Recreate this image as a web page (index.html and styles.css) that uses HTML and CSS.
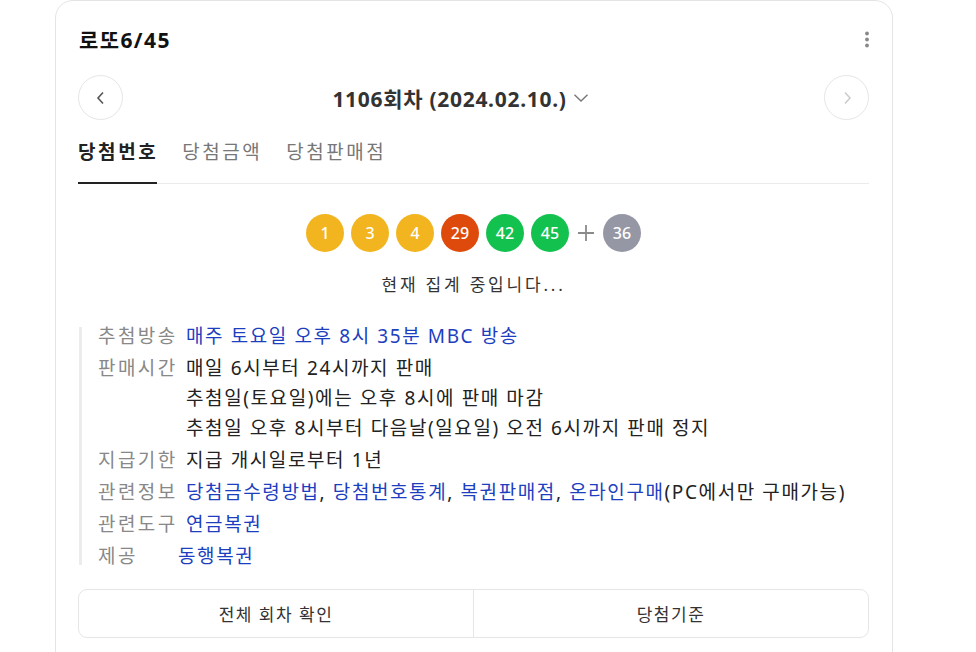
FILE: index.html
```html
<!DOCTYPE html>
<html lang="ko">
<head>
    <meta charset="UTF-8">
    <title>로또6/45 당첨번호</title>
    <link rel="stylesheet" href="styles.css">
</head>
<body>
<div class="page">
    <div class="card">
        <div class="card-head">
            <h2 class="title">로또6/45</h2>
            <button class="more" aria-label="더보기">
                <svg width="6" height="18" viewBox="0 0 6 18"><circle cx="3" cy="2.5" r="1.9"/><circle cx="3" cy="8.5" r="1.9"/><circle cx="3" cy="14.5" r="1.9"/></svg>
            </button>
        </div>

        <!-- 회차 선택 -->
        <div class="round-nav">
            <button class="round-btn">
                <svg width="12" height="14" viewBox="0 0 12 14"><path d="M8 1.5 L3 7 L8 12.5" fill="none" stroke="#555" stroke-width="1.6"/></svg>
            </button>
            <div class="round-title">1106회차 (2024.02.10.)
                <svg class="drop" width="16" height="10" viewBox="0 0 16 10"><path d="M1.5 1.8 L8 8 L14.5 1.8" fill="none" stroke="#777" stroke-width="1.4"/></svg>
            </div>
            <button class="round-btn off">
                <svg width="12" height="14" viewBox="0 0 12 14"><path d="M4 1.5 L9 7 L4 12.5" fill="none" stroke="#ccc" stroke-width="1.6"/></svg>
            </button>
        </div>

        <div class="tabs">
            <a class="tab on">당첨번호</a>
            <a class="tab">당첨금액</a>
            <a class="tab">당첨판매점</a>
        </div>

        <!-- 당첨번호 -->
        <div class="balls">
            <span class="ball yellow">1</span>
            <span class="ball yellow">3</span>
            <span class="ball yellow">4</span>
            <span class="ball red">29</span>
            <span class="ball green">42</span>
            <span class="ball green">45</span>
            <span class="plus">
                <svg width="18" height="18" viewBox="0 0 18 18"><path d="M9 1 V17 M1 9 H17" stroke="#8a8a8a" stroke-width="1.8"/></svg>
            </span>
            <span class="ball gray">36</span>
        </div>
        <p class="status">현재 집계 중입니다...</p>

        <dl class="info">
            <div class="row">
                <dt>추첨방송</dt>
                <dd><a>매주 토요일 오후 8시 35분 MBC 방송</a></dd>
            </div>
            <div class="row">
                <dt>판매시간</dt>
                <dd>매일 6시부터 24시까지 판매<br>추첨일(토요일)에는 오후 8시에 판매 마감<br>추첨일 오후 8시부터 다음날(일요일) 오전 6시까지 판매 정지</dd>
            </div>
            <div class="row">
                <dt>지급기한</dt>
                <dd>지급 개시일로부터 1년</dd>
            </div>
            <div class="row">
                <dt>관련정보</dt>
                <dd><a>당첨금수령방법</a>, <a>당첨번호통계</a>, <a>복권판매점</a>, <a>온라인구매</a>(PC에서만 구매가능)</dd>
            </div>
            <div class="row">
                <dt>관련도구</dt>
                <dd><a>연금복권</a></dd>
            </div>
            <div class="row">
                <dt class="short">제공</dt>
                <dd><a>동행복권</a></dd>
            </div>
        </dl>

        <div class="bottom-btns">
            <a class="bbtn">전체 회차 확인</a>
            <a class="bbtn">당첨기준</a>
        </div>
    </div>
</div>
</body>
</html>
```

FILE: styles.css
```css
body {
    margin: 0;
    background: #fff;
    font-family: "Noto Sans", "Noto Sans CJK KR", sans-serif;
    color: #222;
}

.page {
    padding-left: 55px;
}

.card {
    width: 838px;
    height: 700px;
    box-sizing: border-box;
    border: 1px solid #e4e4e4;
    border-radius: 18px;
    padding: 23px 23px 0 22px;
}

.card-head {
    display: flex;
    justify-content: space-between;
    align-items: center;
    height: 32px;
}

.title {
    margin: 0 0 0 1px;
    font-size: 21px;
    letter-spacing: 1.4px;
    font-weight: 700;
    line-height: 32px;
    color: #111;
}

.more {
    border: 0;
    background: none;
    padding: 0;
    margin-right: -1px;
    fill: #888;
    display: flex;
}

.round-nav {
    display: flex;
    align-items: center;
    justify-content: space-between;
    margin-top: 19px;
}

.round-btn {
    width: 45px;
    height: 45px;
    border-radius: 50%;
    border: 1px solid #e6e6e6;
    background: #fff;
    display: flex;
    align-items: center;
    justify-content: center;
    padding: 0;
}

.round-title {
    font-size: 21px;
    letter-spacing: 0.7px;
    font-weight: 700;
    color: #333;
    display: flex;
    align-items: center;
    gap: 6px;
    margin-right: 26px;
}

.tabs {
    display: flex;
    gap: 26px;
    margin-top: 12px;
    border-bottom: 1px solid #ebebeb;
}

.tab {
    font-size: 19px;
    letter-spacing: 2.5px;
    line-height: 26px;
    padding: 7px 0 19px;
    margin-right: -2px;
    margin-bottom: -1px;
    color: #777;
}

.tab.on {
    color: #222;
    font-weight: 700;
    letter-spacing: 2.6px;
    background: linear-gradient(#222, #222) no-repeat left bottom / calc(100% - 1px) 2px;
}

.balls {
    display: flex;
    justify-content: center;
    align-items: center;
    gap: 7px;
    margin-top: 30px;
}

.ball {
    width: 38px;
    height: 38px;
    border-radius: 50%;
    display: flex;
    align-items: center;
    justify-content: center;
    color: #fff;
    font-size: 16px;
    font-weight: 500;
}

.yellow { background: #f2b51f; }
.red { background: #de4a0b; }
.green { background: #13c14f; }
.gray { background: #9597a5; }

.plus {
    display: flex;
    margin: 0 1px;
}

.status {
    margin: 21px 0 0;
    text-align: center;
    font-size: 17px;
    letter-spacing: 2.8px;
    line-height: 24px;
    color: #333;
}

.info {
    margin: 24px 0 0;
    background: linear-gradient(#ececec, #ececec) no-repeat 1px 6px / 3px calc(100% - 12px);
}

.row {
    display: flex;
    line-height: 30px;
    font-size: 19px;
    letter-spacing: 1.6px;
    margin-top: 2px;
}

.row:first-child {
    margin-top: 0;
}

.row dt {
    width: 88px;
    padding-left: 20px;
    color: #888;
    letter-spacing: 2.4px;
    flex-shrink: 0;
    white-space: nowrap;
}

.row dt.short {
    width: 80px;
}

.row dd {
    margin: 0;
    color: #222;
}

.row a {
    color: #1d3fbf;
}

.bottom-btns {
    display: flex;
    margin-top: 18px;
    border: 1px solid #e6e6e6;
    border-radius: 9px;
    height: 49px;
    box-sizing: border-box;
}

.bbtn {
    flex: 1;
    display: flex;
    align-items: center;
    justify-content: center;
    font-size: 17px;
    letter-spacing: 1.5px;
    color: #333;
}

.bbtn + .bbtn {
    border-left: 1px solid #e6e6e6;
}
```
